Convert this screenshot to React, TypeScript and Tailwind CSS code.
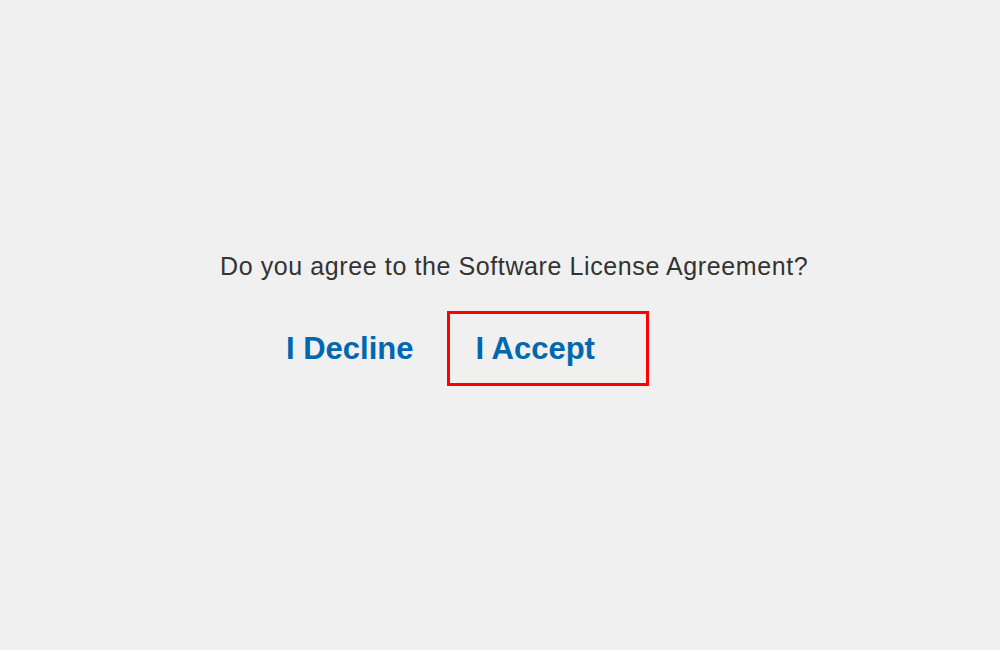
export default function App() {
  return (
    <div
      className="w-[1000px] h-[650px] bg-[#f0f0f0] flex flex-col items-center pt-[250px] pl-[26px]"
      style={{ fontFamily: '"Liberation Sans", Arial, sans-serif' }}
    >
      <div className="w-[586px] flex flex-col">
        <p className="text-[25px] leading-[32px] tracking-[0.6px] text-[#333333] whitespace-nowrap">
          Do you agree to the Software License Agreement?
        </p>
        <div className="flex items-center mt-[29px] pl-[66px]">
          <button className="text-[31px] font-bold text-[#0067b0] leading-none">
            I Decline
          </button>
          <button className="ml-[33px] w-[202px] h-[75px] border-[3px] border-[#ff0000] text-left pl-[26px] text-[31px] font-bold text-[#0067b0] leading-none">
            I Accept
          </button>
        </div>
      </div>
    </div>
  );
}
